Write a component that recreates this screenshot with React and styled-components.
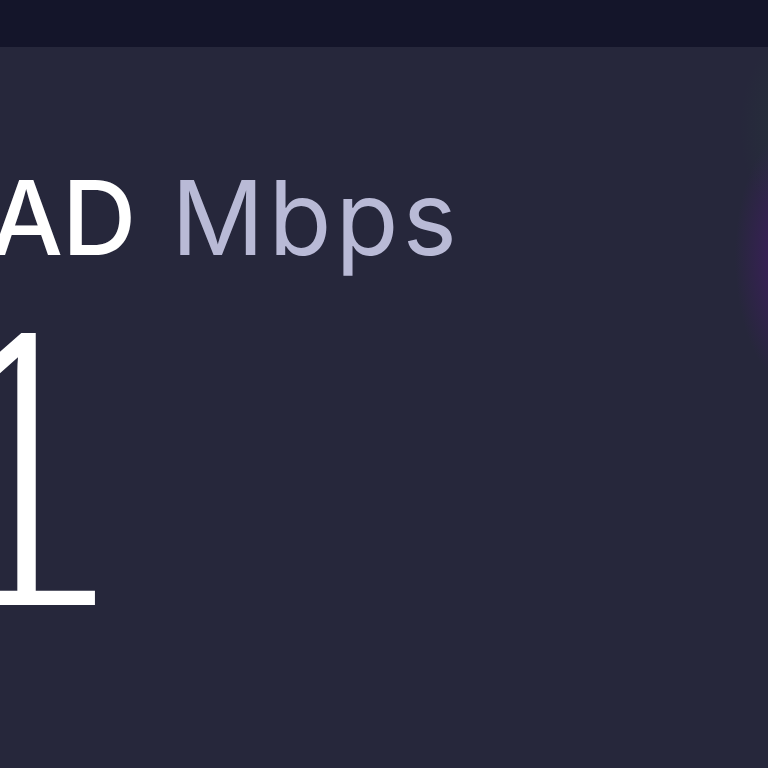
import React from "react";
import styled, { createGlobalStyle } from "styled-components";

const Global = createGlobalStyle`
  html, body { margin: 0; padding: 0; background: #26273b; }
  body { width: 768px; height: 768px; overflow: hidden; }
`;

const Page = styled.div`
  width: 768px;
  height: 768px;
  display: flex;
  flex-direction: column;
  overflow: hidden;
  background: #26273b;
`;

const TopBar = styled.header`
  height: 47px;
  flex: none;
  background: #14152a;
`;

const Panel = styled.section`
  flex: 1;
  display: flex;
  flex-direction: column;
  align-items: flex-start;
  padding-top: 119px;
  background:
    radial-gradient(ellipse 50px 90px at 790px 80px, rgba(40, 70, 60, 0.3), transparent 100%),
    radial-gradient(ellipse 60px 130px at 795px 210px, rgba(75, 25, 115, 0.8), transparent 100%),
    #26273b;
`;

const Label = styled.div`
  display: flex;
  gap: 36px;
  margin-left: -10px;
  font-family: Inter, "Noto Sans", sans-serif;
  font-size: 103px;
  line-height: 1;
  white-space: nowrap;
`;

const Metric = styled.span`
  color: #ffffff;
  font-weight: 500;
  letter-spacing: -1px;
`;

const Unit = styled.span`
  color: #b9bad6;
  font-weight: 400;
  letter-spacing: 4px;
`;

const Value = styled.div`
  margin-left: -96px;
  margin-top: -3px;
  font-family: Lato, "Noto Sans", sans-serif;
  font-weight: 300;
  font-size: 383px;
  line-height: 1;
  color: #ffffff;
`;

export default function App() {
  return (
    <Page>
      <Global />
      <TopBar />
      <Panel>
        <Label>
          <Metric>AD</Metric>
          <Unit>Mbps</Unit>
        </Label>
        <Value>1</Value>
      </Panel>
    </Page>
  );
}
